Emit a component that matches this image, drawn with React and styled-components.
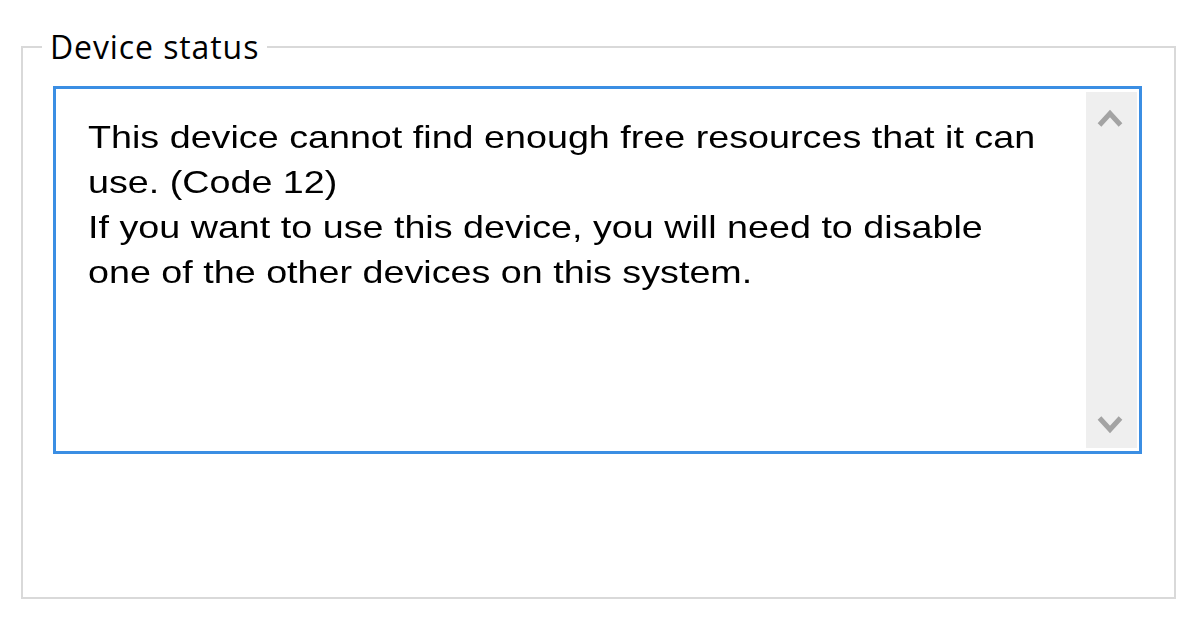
import React from "react";
import styled, { createGlobalStyle } from "styled-components";

const GlobalStyle = createGlobalStyle`
  html, body {
    margin: 0;
    padding: 0;
    background: #ffffff;
  }
  body {
    width: 1200px;
    height: 627px;
    overflow: hidden;
  }
`;

const Page = styled.div`
  box-sizing: border-box;
  width: 1200px;
  height: 627px;
  padding: 27px 24px 0 21px;
  background: #ffffff;
`;

const Group = styled.fieldset`
  box-sizing: border-box;
  margin: 0;
  width: 1155px;
  height: 572px;
  padding: 0;
  border: 2px solid #d9d9d9;
  min-inline-size: 0;
`;

const Legend = styled.legend`
  margin-left: 19px;
  padding: 0 8px 0 8px;
  font-family: "Open Sans", "Noto Sans", sans-serif;
  font-size: 32px;
  line-height: 40px;
  letter-spacing: 0.9px;
  color: #000000;
`;

const Body = styled.div`
  padding: 19px 33px 0 30px;
`;

const StatusBox = styled.div`
  box-sizing: border-box;
  display: flex;
  width: 1089px;
  height: 368px;
  padding: 3px 2px 3px 0;
  border: 3px solid #3b8ee3;
  background: #ffffff;
`;

const StatusText = styled.div`
  flex: 1;
  min-width: 0;
  overflow: hidden;
  padding: 23px 0 0 32px;
`;

const TextBlock = styled.div`
  width: max-content;
  font-family: "Liberation Sans", Arial, sans-serif;
  font-size: 32px;
  line-height: 45px;
  color: #000000;
  white-space: nowrap;
  transform: scaleX(1.178);
  transform-origin: left top;
`;

const Line = styled.div``;

const Scrollbar = styled.div`
  display: flex;
  flex-direction: column;
  justify-content: space-between;
  align-items: center;
  width: 51px;
  padding: 16px 0 13px 0;
  background: #efefef;
  box-sizing: border-box;
`;

const Arrow = styled.svg`
  display: block;
  width: 26px;
  height: 22px;
  margin-right: 4px;
  filter: blur(0.5px);
`;

function Chevron({ down }) {
  return (
    <Arrow viewBox="0 0 26 22">
      <polyline
        points={down ? "2.5,5 13,16.5 23.5,5" : "2.5,17 13,5.5 23.5,17"}
        fill="none"
        stroke="#a3a3a3"
        strokeWidth="5"
        strokeLinejoin="miter"
      />
    </Arrow>
  );
}

export default function App() {
  return (
    <>
      <GlobalStyle />
      <Page>
        <Group>
          <Legend>Device status</Legend>
          <Body>
            <StatusBox>
              <StatusText>
                <TextBlock>
                  <Line>This device cannot find enough free resources that it can</Line>
                  <Line>use. (Code 12)</Line>
                  <Line>If you want to use this device, you will need to disable</Line>
                  <Line>one of the other devices on this system.</Line>
                </TextBlock>
              </StatusText>
              <Scrollbar>
                <Chevron />
                <Chevron down />
              </Scrollbar>
            </StatusBox>
          </Body>
        </Group>
      </Page>
    </>
  );
}
